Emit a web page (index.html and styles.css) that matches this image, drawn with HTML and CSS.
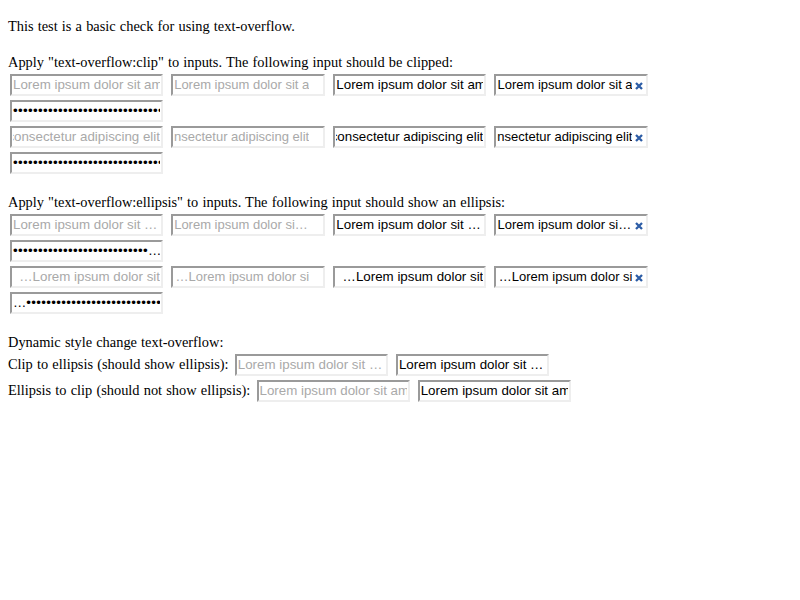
FILE: index.html
```html
<!DOCTYPE html>
<html>
<head>
<meta charset="utf-8">
<title>text-overflow on inputs</title>
<link rel="stylesheet" href="styles.css">
</head>
<body>
<p class="first">This test is a basic check for using text-overflow.</p>

<p>Apply "text-overflow:clip" to inputs. The following input should be clipped:<br>
<span class="field"><span class="txt ph">Lorem ipsum dolor sit amet, consectetur adipiscing elit</span></span>
<span class="field search"><span class="txt ph">Lorem ipsum dolor sit amet, consectetur adipiscing elit</span><span class="xspace"></span></span>
<span class="field"><span class="txt">Lorem ipsum dolor sit amet, consectetur adipiscing elit</span></span>
<span class="field search"><span class="txt">Lorem ipsum dolor sit amet, consectetur adipiscing elit</span><svg class="x" viewBox="0 0 8 8"><path d="M1 1L7 7M7 1L1 7"/></svg></span><br>
<span class="field"><span class="txt dots">••••••••••••••••••••••••••••••••</span></span><br>
<span class="field"><span class="txt ph rtl">Lorem ipsum dolor sit amet, consectetur adipiscing elit</span></span>
<span class="field search"><span class="txt ph rtl">Lorem ipsum dolor sit amet, consectetur adipiscing elit</span><span class="xspace"></span></span>
<span class="field"><span class="txt rtl">Lorem ipsum dolor sit amet, consectetur adipiscing elit</span></span>
<span class="field search"><span class="txt rtl">Lorem ipsum dolor sit amet, consectetur adipiscing elit</span><svg class="x" viewBox="0 0 8 8"><path d="M1 1L7 7M7 1L1 7"/></svg></span><br>
<span class="field"><span class="txt dots">••••••••••••••••••••••••••••••••</span></span>
</p>

<p>Apply "text-overflow:ellipsis" to inputs. The following input should show an ellipsis:<br>
<span class="field"><span class="txt ph">Lorem ipsum dolor sit …</span></span>
<span class="field search"><span class="txt ph">Lorem ipsum dolor si…</span><span class="xspace"></span></span>
<span class="field"><span class="txt">Lorem ipsum dolor sit …</span></span>
<span class="field search"><span class="txt">Lorem ipsum dolor si…</span><svg class="x" viewBox="0 0 8 8"><path d="M1 1L7 7M7 1L1 7"/></svg></span><br>
<span class="field"><span class="txt dots">•••••••••••••••••••••••••••<span class="ell">…</span></span></span><br>
<span class="field"><span class="txt ph end">…Lorem ipsum dolor sit</span></span>
<span class="field search"><span class="txt ph end">…Lorem ipsum dolor si</span><span class="xspace"></span></span>
<span class="field"><span class="txt end">…Lorem ipsum dolor sit</span></span>
<span class="field search"><span class="txt end">…Lorem ipsum dolor si</span><svg class="x" viewBox="0 0 8 8"><path d="M1 1L7 7M7 1L1 7"/></svg></span><br>
<span class="field"><span class="txt dots"><span class="ell">…</span>••••••••••••••••••••••••••••••</span></span>
</p>

<p>Dynamic style change text-overflow:<br>
Clip to ellipsis (should show ellipsis): <span class="field"><span class="txt ph">Lorem ipsum dolor sit …</span></span>
<span class="field"><span class="txt">Lorem ipsum dolor sit …</span></span><br>
Ellipsis to clip (should not show ellipsis): <span class="field"><span class="txt ph">Lorem ipsum dolor sit amet, consectetur adipiscing elit</span></span>
<span class="field"><span class="txt">Lorem ipsum dolor sit amet, consectetur adipiscing elit</span></span>
</p>
</body>
</html>
```

FILE: styles.css
```css
html, body {
  background: #ffffff;
}

body {
  margin: 0;
  padding: 16px 8px 8px;
  font-family: "Liberation Serif", "Times New Roman", serif;
  font-size: 14.4px;
  word-spacing: 0.55px;
  line-height: 20px;
  color: #000000;
}

p {
  margin: 16px 0;
}

p.first {
  margin-top: 0;
}

.field {
  display: inline-flex;
  box-sizing: border-box;
  width: 153px;
  height: 22px;
  margin: 2px;
  padding: 1px;
  border-style: solid;
  border-width: 2px;
  border-color: #9a9a9a #eeeeee #eeeeee #9a9a9a;
  background: #ffffff;
  font-family: "Liberation Sans", Arial, sans-serif;
  font-size: 13.33px;
  word-spacing: 0;
  line-height: 16px;
  color: #000000;
  vertical-align: baseline;
  overflow: hidden;
}

.field.search {
  width: 154px;
  font-size: 13px;
}

.txt {
  flex: 1 1 auto;
  min-width: 0;
  overflow: hidden;
  white-space: pre;
}

.txt.ph {
  color: #a9a9a9;
}

.txt.rtl {
  direction: rtl;
}

.txt.end {
  text-align: right;
}

.txt.dots {
  letter-spacing: 0.33px;
}

.ell {
  letter-spacing: 0;
}

.xspace {
  flex: 0 0 13px;
}

.x {
  flex: 0 0 8px;
  width: 8px;
  height: 8px;
  margin: 5px 2px 0 3px;
  fill: none;
  stroke: #2d5da6;
  stroke-width: 2.3;
  stroke-linecap: butt;
}
```
